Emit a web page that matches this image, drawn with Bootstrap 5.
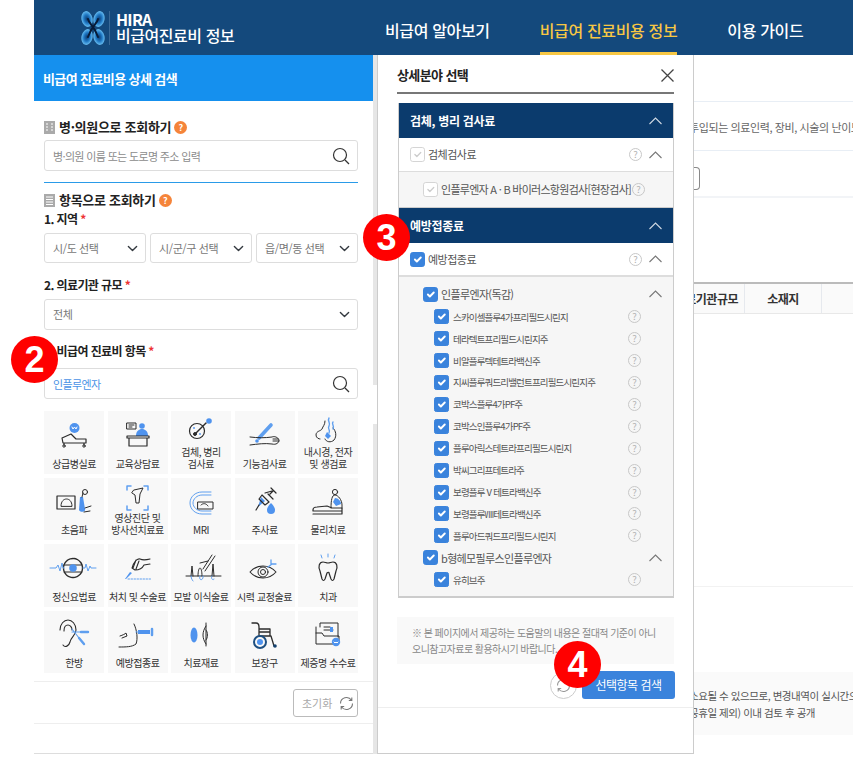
<!DOCTYPE html>
<html lang="ko">
<head>
  <meta charset="UTF-8">
  <title>비급여 진료비용 상세 검색</title>
  <link href="https://cdn.jsdelivr.net/npm/bootstrap@5.3.0/dist/css/bootstrap.min.css" rel="stylesheet">
  <style>
    body { font-family: "Noto Sans CJK KR", "Noto Sans", sans-serif; height: 766px; overflow: hidden; background: #fff; color: #222; letter-spacing: -0.5px; }
    .page { position: relative; padding-left: 34px; height: 766px; }
    .top-bar { height: 55px; background: #14497c; }
    .logo-box { width: 351px; padding-left: 47px; }
    .logo-sep { width: 1px; height: 34px; background: #3a6a98; margin: 0 6px 0 4px; }
    .logo-txt { font-size: 16px; font-weight: 500; line-height: 17px; color: #fff; letter-spacing: -0.45px; }
    .logo-txt b { font-size: 16px; font-weight: 700; display: block; line-height: 16px; letter-spacing: -0.75px; }
    .top-link { font-size: 16px; font-weight: 500; color: #fff; height: 55px; line-height: 60px; text-decoration: none; letter-spacing: -0.35px; }
    .top-link.on { color: #f7c744; border-bottom: 3px solid #f7c744; }
    .main-area { height: 699px; }
    .left-panel { width: 339px; height: 699px; border-bottom: 1px solid #ddd; }
    .left-bar { width: 4px; height: 699px; }
    .bar-on { background: #e6e6e6; }
    .bar-top { height: 330px; }
    .bar-gap { height: 39px; }
    .panel-head { height: 46px; line-height: 47px; background: #1590ee; color: #fff; font-size: 13px; font-weight: 700; padding-left: 9px; letter-spacing: -0.6px; }
    .panel-body { padding: 0 15px 0 10px; }
    .sec-tit { height: 18px; line-height: 18px; font-size: 13px; font-weight: 700; letter-spacing: -0.3px; }
    .sec-tit svg { margin-right: 4px; }
    .q-mark { width: 13px; height: 13px; border-radius: 50%; background: #f5843a; color: #fff; font-size: 9px; line-height: 13px; text-align: center; margin-left: 3px; font-weight: 700; }
    .fld-label { height: 16px; line-height: 16px; font-size: 12px; font-weight: 700; letter-spacing: -0.6px; }
    .fld-label i { color: #e33; font-style: normal; }
    .search-wrap { height: 31px; border: 1px solid #ddd; border-radius: 3px; padding: 0 7px 0 8px; }
    .search-wrap input { border: 0; outline: 0; padding: 0; font-size: 11px; height: 28px; box-shadow: none; letter-spacing: -0.65px; background: transparent; }
    .search-wrap input::placeholder { color: #8c8c8c; opacity: 1; }
    .search-wrap input.val { color: #4b93e6; }
    .pick { height: 31px; font-size: 11px; color: #777; border-color: #ddd; border-radius: 3px; padding: 0 20px 0 8px; background-position: right 6px center; background-size: 13px 11px; letter-spacing: -0.4px; }
    .pick-row { height: 30px; gap: 4px; }
    .pick-row .pick { height: 30px; width: 102px; flex: none; }
    .blue-line { height: 1px; background: #2a9be8; }
    .tile-grid { display: grid; grid-template-columns: repeat(5, 60px); grid-auto-rows: 62.5px; column-gap: 3.5px; row-gap: 4px; }
    .tile { background: #f8f8f8; padding-top: 3px; padding-bottom: 4px; }
    .tile svg { width: 60px; height: 30px; overflow: visible; flex: none; fill: none; stroke: #2b2b2b; stroke-width: 1; stroke-linecap: round; stroke-linejoin: round; }
    .tile svg .bf { fill: #4f93ee; stroke: none; }
    .tile svg .bs { stroke: #5f9fef; }
    .tile-txt { font-size: 10px; line-height: 12px; text-align: center; margin-top: auto; white-space: nowrap; letter-spacing: -0.45px; color: #333; }
    .panel-foot { border-top: 1px solid #eee; border-bottom: 1px solid #eee; height: 43px; padding: 7px 15px 0 0; }
    .reset-btn { width: 65px; height: 28px; border: 1px solid #bbb; border-radius: 3px; background: #fff; font-size: 11px; color: #aaa; padding: 0 2px 0 8px; }

    .picker { width: 317px; height: 699px; border: 1px solid #ccc; border-top: 0; background: #fff; flex: none; }
    .picker-in { padding: 0 19px 0 19px; }
    .picker-top { height: 39px; padding-top: 10px; border-bottom: 2px solid #777; font-size: 13px; font-weight: 700; line-height: 20px; letter-spacing: -0.6px; }
    .pick-box { margin: 9px 0 0 1px; height: 495px; border: 1px solid #ccc; border-top: 0; border-bottom-width: 2px; background: #f6f6f6; }
    .grp-head { height: 35px; background: #0b3b6d; color: #fff; font-size: 12px; font-weight: 700; padding: 0 11px; letter-spacing: -0.3px; }
    .grp-head svg { stroke: #cfd8e3; }
    .pick-row-a { height: 34px; background: #fff; border-bottom: 1px solid #ddd; padding: 0 11px; font-size: 11px; color: #555; }
    .pick-row-a.wide { border-bottom-width: 2px; }
    .pick-row-b { height: 36px; border-bottom: 1px solid #ccc; padding: 0 11px 0 24px; font-size: 11px; color: #555; letter-spacing: -0.72px; }
    .pick-row-c { height: 22px; padding: 0 11px 0 24px; font-size: 11px; color: #555; letter-spacing: -0.65px; }
    .pick-row-d { height: 21.9px; padding: 0 32px 0 35px; font-size: 9.5px; color: #555; letter-spacing: -0.85px; }
    .tick { width: 15px; height: 15px; margin: 0 3px 0 0; border-radius: 2px; flex: none; opacity: 1 !important; }
    .pick-row-d .tick { margin-right: 4px; }
    .tick:checked { background-color: #3a83dc; border-color: #3a83dc; }
    .tick.off:checked { background-color: #fff; border-color: #d5d5d5; background-image: url("data:image/svg+xml,%3csvg xmlns='http://www.w3.org/2000/svg' viewBox='0 0 20 20'%3e%3cpath fill='none' stroke='%23ccc' stroke-linecap='round' stroke-linejoin='round' stroke-width='2' d='m6 10 3 3 6-6'/%3e%3c/svg%3e"); }
    .help-dot { width: 13px; height: 13px; border-radius: 50%; border: 1px solid #c8c8c8; color: #b5b5b5; font-size: 9.5px; line-height: 11px; text-align: center; flex: none; letter-spacing: 0; }
    .up-arrow { flex: none; fill: none; stroke: #777; stroke-width: 1.1; margin-left: 7px; }
    .note-box { margin-top: 19px; height: 47px; background: #f9f9f9; font-size: 10px; line-height: 15.5px; color: #888; padding: 8px 8px 0 15px; letter-spacing: -0.55px; white-space: nowrap; }
    .redo-dot { width: 27px; height: 27px; border-radius: 50%; border: 1px solid #ccc; margin-right: 5px; }
    .go-btn { width: 93px; height: 28px; padding: 0; background: #3a83dc; border: 0; border-radius: 3px; font-size: 12px; color: #fff; letter-spacing: -0.5px; }
    .picker-foot { margin-top: 8px; border-top: 1px solid #eee; }

    .rest-col { min-width: 0; flex: 1; overflow: hidden; height: 699px; font-size: 11px; color: #666; white-space: nowrap; }
    .rest-a { height: 47px; border-bottom: 1px solid #e8eef5; }
    .rest-b { height: 49px; line-height: 50px; border-bottom: 1px solid #e8eef5; text-indent: -5px; letter-spacing: -0.4px; }
    .rest-c { height: 47px; border-bottom: 2px solid #f2f4f7; padding-top: 16px; }
    .stub-btn { width: 6px; height: 23px; border: 1px solid #888; border-left: 0; border-radius: 0 4px 4px 0; }
    .rest-th { margin-top: 84px; height: 32px; border-top: 2px solid #bbb; border-bottom: 1px solid #e8e8e8; background: #fafafa; font-size: 12px; font-weight: 700; color: #333; line-height: 29px; }
    .rest-th > div { border-right: 1px solid #e6e9ee; overflow: hidden; }
    .th-a { width: 51px; padding-right: 6px; flex: none; }
    .th-b { width: 77px; flex: none; text-align: center; }
    .rest-line { margin-top: 272px; height: 1px; background: #f2f2f2; }
    .rest-note { margin-top: 85px; height: 63px; background: #fafafa; padding-top: 16px; line-height: 16.5px; font-size: 10.5px; color: #555; letter-spacing: -0.45px; }
    .rest-note div { text-indent: -5px; }

    .mark-num { position: absolute; width: 47px; height: 47px; border-radius: 50%; background: #f00; color: #fff; font-family: "Liberation Sans", Arial, sans-serif; font-weight: 700; font-size: 36px; line-height: 47px; text-align: center; letter-spacing: 0; }
    .mark-2 { left: 11px; top: 336px; }
    .mark-3 { left: 363px; top: 214px; }
    .mark-4 { left: 554px; top: 641px; }
  </style>
</head>
<body>
  <div class="page">
    <div class="top-bar d-flex align-items-center">
      <div class="logo-box d-flex align-items-center">
        <svg width="24" height="34" viewBox="0 0 24 34">
          <defs><radialGradient id="lobe"><stop offset="0" stop-color="#0d3a70"/><stop offset=".55" stop-color="#1f78c4"/><stop offset="1" stop-color="#67bdf2"/></radialGradient></defs>
          <g fill="url(#lobe)">
            <ellipse cx="6" cy="8" rx="5.500" ry="8" transform="rotate(-12 6 8)"/>
            <ellipse cx="18" cy="8" rx="5.500" ry="8" transform="rotate(12 18 8)"/>
            <ellipse cx="6" cy="26" rx="5.500" ry="8" transform="rotate(12 6 26)"/>
            <ellipse cx="18" cy="26" rx="5.500" ry="8" transform="rotate(-12 18 26)"/>
          </g>
          <path fill="none" stroke="#081b38" stroke-width="2" stroke-linecap="round" d="M7 8c1 5 6 6 10 18M17 8c-1 5-6 6-10 18"/>
        </svg>
        <div class="logo-sep"></div>
        <div class="logo-txt"><b>HIRA</b>비급여진료비 정보</div>
      </div>
      <a class="top-link" href="#">비급여 알아보기</a>
      <a class="top-link on" href="#" style="margin-left:50px">비급여 진료비용 정보</a>
      <a class="top-link" href="#" style="margin-left:50px">이용 가이드</a>
    </div>

    <div class="main-area d-flex">
      <div class="left-panel flex-none">
        <div class="panel-head">비급여 진료비용 상세 검색</div>
        <div class="panel-body">
          <div class="sec-tit d-flex align-items-center" style="margin-top:17px">
            <svg width="11" height="13" viewBox="0 0 11 13"><rect width="11" height="13" fill="#aaa"/><path stroke="#fff" d="M2 3h2M7 3h2M2 6h2M7 6h2M2 9h2M7 9h2"/></svg>
            병·의원으로 조회하기<span class="q-mark">?</span>
          </div>
          <div class="search-wrap d-flex align-items-center" style="margin-top:4px">
            <input class="form-control" type="text" placeholder="병·의원 이름 또는 도로명 주소 입력">
            <svg class="flex-shrink-0" width="18" height="18" viewBox="0 0 18 18" fill="none" stroke="#333" stroke-width="1.2"><circle cx="8" cy="8" r="6.5"/><path d="m13 13 4 4"/></svg>
          </div>
          <div class="blue-line" style="margin-top:11px"></div>
          <div class="sec-tit d-flex align-items-center" style="margin-top:8px">
            <svg width="11" height="13" viewBox="0 0 11 13"><rect width="11" height="13" fill="#aaa"/><path stroke="#fff" d="M2 3h7M2 5.5h7M2 8h7M2 10.5h7"/></svg>
            항목으로 조회하기<span class="q-mark">?</span>
          </div>
          <div class="fld-label" style="margin-top:2px">1. 지역 <i>*</i></div>
          <div class="pick-row d-flex" style="margin-top:6px">
            <select class="form-select pick"><option>시/도 선택</option></select>
            <select class="form-select pick"><option>시/군/구 선택</option></select>
            <select class="form-select pick"><option>읍/면/동 선택</option></select>
          </div>
          <div class="fld-label" style="margin-top:14px">2. 의료기관 규모 <i>*</i></div>
          <select class="form-select pick" style="margin-top:6px"><option>전체</option></select>
          <div class="fld-label" style="margin-top:13px">3. 비급여 진료비 항목 <i>*</i></div>
          <div class="search-wrap d-flex align-items-center" style="margin-top:9px">
            <input class="form-control val" type="text" value="인플루엔자">
            <svg class="flex-shrink-0" width="18" height="18" viewBox="0 0 18 18" fill="none" stroke="#333" stroke-width="1.2"><circle cx="8" cy="8" r="6.5"/><path d="m13 13 4 4"/></svg>
          </div>

          <div class="tile-grid" style="margin-top:12px">
            <div class="tile d-flex flex-column align-items-center">
              <svg viewBox="0 0 60 30"><circle class="bf" cx="30.5" cy="14" r="5"/><path stroke="#fff" d="M28 13l1 2 1.500-2 1.500 2 1-2"/><path stroke-width="1.200" d="M18 24l9-4 5 5h10v4H19zM20 29v2M40 29v2"/><circle cx="20" cy="32" r="1.200"/><circle cx="40" cy="32" r="1.200"/></svg>
              <div class="tile-txt">상급병실료</div>
            </div>
            <div class="tile d-flex flex-column align-items-center">
              <svg viewBox="0 0 60 30"><rect x="19" y="9" width="9" height="6"/><path d="M21 11h5M21 13h3"/><circle class="bf" cx="34" cy="12" r="2.800"/><path class="bf" d="M28 22c0-5 3-7 6-7s6 2 6 7z"/><path stroke-width="1.200" d="M19 22h22v2H19zM21 24v8h18v-8"/></svg>
              <div class="tile-txt">교육상담료</div>
            </div>
            <div class="tile d-flex flex-column align-items-center">
              <svg viewBox="0 0 60 30"><circle cx="26" cy="17" r="7.500" stroke-width="1.200"/><path stroke-width="1.500" d="M25 19l10-10"/><circle class="bf" cx="38" cy="7" r="2.800"/><circle cx="24" cy="20" r="1.500" fill="#2b2b2b"/><circle class="bf" cx="29" cy="20" r=".9"/><circle class="bf" cx="23" cy="14" r=".9"/></svg>
              <div class="tile-txt">검체, 병리<br>검사료</div>
            </div>
            <div class="tile d-flex flex-column align-items-center">
              <svg viewBox="0 0 60 30"><path class="bs" stroke-width="3.600" d="M24 24 36 11"/><circle class="bf" cx="22" cy="27" r="1.800"/><path d="M15 23c8 1 15 1 22 0 2-1 6 0 7 3 0 3-3 5-7 4-7-1-14 0-22 1M38 25h5M38 27h6"/></svg>
              <div class="tile-txt">기능검사료</div>
            </div>
            <div class="tile d-flex flex-column align-items-center">
              <svg viewBox="0 0 60 30"><path d="M27 7c0 4-2 5-3 8-1 2-6 2-6 6 0 3 3 4 4 4M35 14c3 3 4 8 1 12-3 3-8 2-9-1"/><path class="bs" stroke-width="1.400" d="M31 4c-2 3 2 5 0 8s2 4 0 7M35 8c-2 2 2 4 0 7"/><path class="bf" d="M29 18l4 4-3 3-3-3z"/></svg>
              <div class="tile-txt">내시경, 전자<br>및 생검료</div>
            </div>

            <div class="tile d-flex flex-column align-items-center">
              <svg viewBox="0 0 60 30"><rect x="13" y="15" width="18" height="13" stroke-width="1.200"/><path d="M17 25c0-5 3-7 5.500-7s5.500 2 5.500 7z"/><path class="bf" d="M36 16h3l2 12c1 3-5 4-6 1z"/><circle cx="41" cy="11" r="2.500"/><path d="M38 16l1-4M41 27l6-2M40 31l6-1"/></svg>
              <div class="tile-txt">초음파</div>
            </div>
            <div class="tile d-flex flex-column align-items-center">
              <svg viewBox="0 0 60 30"><path class="bs" stroke-width="1.500" d="M19 9V5h4M36 5h4v4M19 25v4h4M36 29h4v-4"/><path d="M26 9l9-2-3 6-1 9h-3l-1-8-3-2z"/></svg>
              <div class="tile-txt">영상진단 및<br>방사선치료료</div>
            </div>
            <div class="tile d-flex flex-column align-items-center">
              <svg viewBox="0 0 60 30"><path class="bs" d="M40 11H31c-7 0-12 5-12 11s5 11 12 11h9M40 14H31c-5 0-9 4-9 8s4 8 9 8h9"/><path d="M27 21h15v7H27zM30 24c2-2 5-2 7 1"/></svg>
              <div class="tile-txt">MRI</div>
            </div>
            <div class="tile d-flex flex-column align-items-center">
              <svg viewBox="0 0 60 30"><path class="bf" d="M26 16l4 4-7 6z"/><path stroke-width="1.200" d="M27 14l7 7-4 3-6-6zM33 13l5 5M30 12l7-2M36 7l5 5M38 10l-3 3M24 24l-3 5"/><path class="bf" d="M36 22c3 3 4 5 4 7a4 4 0 0 1-8 0c0-2 1-4 4-7z"/></svg>
              <div class="tile-txt">주사료</div>
            </div>
            <div class="tile d-flex flex-column align-items-center">
              <svg viewBox="0 0 60 30"><circle cx="37" cy="11" r="2.600"/><path d="M33 27c0-8 1-13 4-13s7 5 7 10v3"/><path class="bf" d="M37 17c3 0 6 3 6 6l-5 2-3-4z"/><path stroke-width="1.200" d="M15 29c0-2 2-3 4-3l10-1 5 2h10v3H15zM15 33h29v-3"/></svg>
              <div class="tile-txt">물리치료</div>
            </div>

            <div class="tile d-flex flex-column align-items-center">
              <svg viewBox="0 0 60 30"><circle cx="29" cy="21" r="9.500" stroke-dasharray="3 .8" stroke-width="1.400"/><path d="M20 18h18M20 25h18"/><circle class="bf" cx="29" cy="21" r="3.800"/><path class="bs" d="M6 21h6l2-3 2 6 2-8 1 5h1M39 21h2l1-4 2 7 2-5 1 2h5"/></svg>
              <div class="tile-txt">정신요법료</div>
            </div>
            <div class="tile d-flex flex-column align-items-center">
              <svg viewBox="0 0 60 30"><path stroke-width="1.100" d="M42 12c-4 1-8 1-10 0-3-1-7 4-8 9l3 2c5 0 8-3 9-5l6-1M28 13l-3 8M31 14l-3 8"/><path class="bf" d="M22 25l2 1-6 6h-1z"/><path class="bs" stroke-dasharray="1.500 1.500" d="M20 32h24"/></svg>
              <div class="tile-txt">처치 및 수술료</div>
            </div>
            <div class="tile d-flex flex-column align-items-center">
              <svg viewBox="0 0 60 30"><path d="M15 29h35M20 29l1-10 1 10M27 29c0-5 1-8 2-8s2 3 2 8M41 29l1-12 1 12M32 22l9-14M34 24l10-15M29 16l8-2"/><path class="bs" d="M20 29c0 3 2 5 2 5M29 29c-2 5 4 5 3 0M41 29c-2 3 2 5 2 3"/></svg>
              <div class="tile-txt">모발 이식술료</div>
            </div>
            <div class="tile d-flex flex-column align-items-center">
              <svg viewBox="0 0 60 30"><path stroke-width="1.100" d="M15 25c7-8 19-8 26 0-7 8-19 8-26 0z"/><circle cx="28" cy="25" r="5"/><circle cx="28" cy="25" r="2.500"/><path class="bs" stroke-width="1.300" d="M33 20l4-3M36 13v4h5"/></svg>
              <div class="tile-txt">시력 교정술료</div>
            </div>
            <div class="tile d-flex flex-column align-items-center">
              <svg viewBox="0 0 60 30"><path stroke-width="1.200" d="M25 15c-4 0-5 5-3 9l2 8c1 2 2 2 3 0l2-6c1-1 2-1 2 0l2 6c1 2 2 2 3 0l2-8c2-4 1-9-3-9-2 0-3 1-5 1s-3-1-5-1z"/><path class="bs" d="M30 7v3M23 8l1 3M37 8l-1 3"/></svg>
              <div class="tile-txt">치과</div>
            </div>

            <div class="tile d-flex flex-column align-items-center">
              <svg viewBox="0 0 60 30"><path stroke-width="1.100" d="M16 16c0-6 4-10 8-10s8 4 8 10c0 5-5 7-6 12-1 4-5 6-7 3M20 17c0-4 2-6 4-6s4 2 4 5"/><path class="bs" stroke-width="1.100" d="M28 18h10M28 15l11 14"/><path class="bs" stroke-width="2.400" d="M37 18h7M35 24l5 6"/></svg>
              <div class="tile-txt">한방</div>
            </div>
            <div class="tile d-flex flex-column align-items-center">
              <svg viewBox="0 0 60 30"><path d="M12 22c3-1 5-2 6-3l1 3-5 2M26 10c3 6 4 15 2 20-4 3-10 3-17 3"/><path class="bf" d="M30 16h12v4H30z"/><path class="bs" stroke-width="2.500" d="M44 15v6"/><path class="bs" stroke-width="1.200" d="M28 18h3"/></svg>
              <div class="tile-txt">예방접종료</div>
            </div>
            <div class="tile d-flex flex-column align-items-center">
              <svg viewBox="0 0 60 30"><ellipse class="bf" cx="23" cy="21" rx="3.500" ry="7.500"/><path d="M35 9v23M35 12c-2 3-3 6-3 9s1 6 3 9M35 16c2 2 2 8 0 10"/></svg>
              <div class="tile-txt">치료재료</div>
            </div>
            <div class="tile d-flex flex-column align-items-center">
              <svg viewBox="0 0 60 30"><path stroke-width="1.300" d="M17 9h4c2 0 3 2 3 4v9h12l3 10M24 15h11v7M24 18h11"/><circle cx="25" cy="28" r="6" stroke="#1d4f80" stroke-width="2"/><circle class="bf" cx="25" cy="28" r="3"/><circle cx="40" cy="32" r="1.800" fill="#12406e" stroke="none"/></svg>
              <div class="tile-txt">보장구</div>
            </div>
            <div class="tile d-flex flex-column align-items-center">
              <svg viewBox="0 0 60 30"><path d="M18 13v17h21M22 13V9h18v14M26 13h6M26 16h9"/><path d="M18 19h6l2 3h15v5"/><rect class="bf" x="32" y="13" width="3" height="5"/><circle class="bf" cx="38" cy="28" r="4.200"/><path stroke="#fff" d="M36 28l1 1 1-1 1 1 1-1"/></svg>
              <div class="tile-txt">제증명 수수료</div>
            </div>
          </div>
        </div>
        <div class="panel-foot d-flex justify-content-end" style="margin-top:8px">
          <button class="reset-btn d-flex align-items-center justify-content-between" type="button">초기화
            <svg width="17" height="17" viewBox="0 0 17 17" fill="none" stroke="#777" stroke-width="1.100"><path d="M2.500 8.500a6 6 0 0 1 11-3.300M14.500 8.500a6 6 0 0 1-11 3.300M13.800 2.500v3h-3M3.200 14.500v-3h3"/></svg>
          </button>
        </div>
      </div>
      <div class="left-bar flex-none d-flex flex-column">
        <div class="bar-on bar-top"></div>
        <div class="bar-gap"></div>
        <div class="bar-on flex-grow-1"></div>
      </div>

      <div class="picker">
        <div class="picker-in">
          <div class="picker-top d-flex justify-content-between">
            상세분야 선택
            <svg width="13" height="13" viewBox="0 0 13 13" class="mt-1" fill="none" stroke="#444" stroke-width="1.300"><path d="m.5.500 12 12M12.500.500l-12 12"/></svg>
          </div>
          <div class="pick-box" id="pickBox">
            <div class="grp-head d-flex align-items-center justify-content-between">검체, 병리 검사료
              <svg class="up-arrow" width="13" height="8" viewBox="0 0 13 8"><path d="m.5 7 6-6 6 6"/></svg></div>
            <div class="pick-row-a d-flex align-items-center">
              <input class="form-check-input tick off" type="checkbox" checked disabled>검체검사료
              <span class="help-dot ms-auto">?</span><svg class="up-arrow" width="13" height="8" viewBox="0 0 13 8"><path d="m.5 7 6-6 6 6"/></svg>
            </div>
            <div class="pick-row-b d-flex align-items-center">
              <input class="form-check-input tick off" type="checkbox" checked disabled>인플루엔자 A · B 바이러스항원검사[현장검사]
              <span class="help-dot" style="margin-left:1px">?</span>
            </div>
            <div class="grp-head d-flex align-items-center justify-content-between">예방접종료
              <svg class="up-arrow" width="13" height="8" viewBox="0 0 13 8"><path d="m.5 7 6-6 6 6"/></svg></div>
            <div class="pick-row-a wide d-flex align-items-center">
              <input class="form-check-input tick" type="checkbox" checked>예방접종료
              <span class="help-dot ms-auto">?</span><svg class="up-arrow" width="13" height="8" viewBox="0 0 13 8"><path d="m.5 7 6-6 6 6"/></svg>
            </div>
            <div class="pick-row-c d-flex align-items-center" style="margin-top:6px;margin-bottom:1px">
              <input class="form-check-input tick" type="checkbox" checked>인플루엔자(독감)
              <svg class="up-arrow ms-auto" width="13" height="8" viewBox="0 0 13 8"><path d="m.5 7 6-6 6 6"/></svg>
            </div>
            <div id="fluList"></div>
            <div class="pick-row-c d-flex align-items-center">
              <input class="form-check-input tick" type="checkbox" checked>b형헤모필루스인플루엔자
              <svg class="up-arrow ms-auto" width="13" height="8" viewBox="0 0 13 8"><path d="m.5 7 6-6 6 6"/></svg>
            </div>
            <div class="pick-row-d d-flex align-items-center justify-content-between">
              <span class="d-flex align-items-center"><input class="form-check-input tick" type="checkbox" checked>유히브주</span>
              <span class="help-dot">?</span>
            </div>
          </div>
          <div class="note-box">※ 본 페이지에서 제공하는 도움말의 내용은 절대적 기준이 아니<br>오니참고자료로 활용하시기 바랍니다.</div>
          <div class="d-flex justify-content-end align-items-center" style="margin-top:7px;margin-right:-1px">
            <div class="redo-dot d-flex align-items-center justify-content-center">
              <svg width="17" height="17" viewBox="0 0 17 17" fill="none" stroke="#999" stroke-width="1.100"><path d="M2.500 8.500a6 6 0 0 1 11-3.300M14.500 8.500a6 6 0 0 1-11 3.300M13.800 2.500v3h-3M3.200 14.500v-3h3"/></svg>
            </div>
            <button class="btn go-btn" type="button">선택항목 검색</button>
          </div>
        </div>
        <div class="picker-foot"></div>
      </div>

      <div class="rest-col">
        <div class="rest-a"></div>
        <div class="rest-b">투입되는 의료인력, 장비, 시술의 난이도</div>
        <div class="rest-c"><div class="stub-btn"></div></div>
        <div class="rest-th d-flex">
          <div class="th-a d-flex justify-content-end">의료기관규모</div>
          <div class="th-b">소재지</div>
        </div>
        <div class="rest-line"></div>
        <div class="rest-note">
          <div>소요될 수 있으므로, 변경내역이 실시간으로</div>
          <div>공휴일 제외) 이내 검토 후 공개</div>
        </div>
      </div>
    </div>

    <div class="mark-num mark-2">2</div>
    <div class="mark-num mark-3">3</div>
    <div class="mark-num mark-4">4</div>
  </div>

  <script>
    var fluItems = ['스카이셀플루4가프리필드시린지', '테라텍트프리필드시린지주', '비알플루텍테트라백신주', '지씨플루쿼드리밸런트프리필드시린지주', '코박스플루4가PF주', '코박스인플루4가PF주', '플루아릭스테트라프리필드시린지', '박씨그리프테트라주', '보령플루Ⅴ테트라백신주', '보령플루Ⅷ테트라백신주', '플루아드쿼드프리필드시린지'];
    var fluHtml = '';
    for (var i = 0; i < fluItems.length; i++) {
      fluHtml += '<div class="pick-row-d d-flex align-items-center justify-content-between">' +
        '<span class="d-flex align-items-center"><input class="form-check-input tick" type="checkbox" checked>' + fluItems[i] + '</span>' +
        '<span class="help-dot">?</span></div>';
    }
    document.getElementById('fluList').innerHTML = fluHtml;
  </script>
  <script src="https://cdn.jsdelivr.net/npm/bootstrap@5.3.0/dist/js/bootstrap.bundle.min.js"></script>
</body>
</html>
